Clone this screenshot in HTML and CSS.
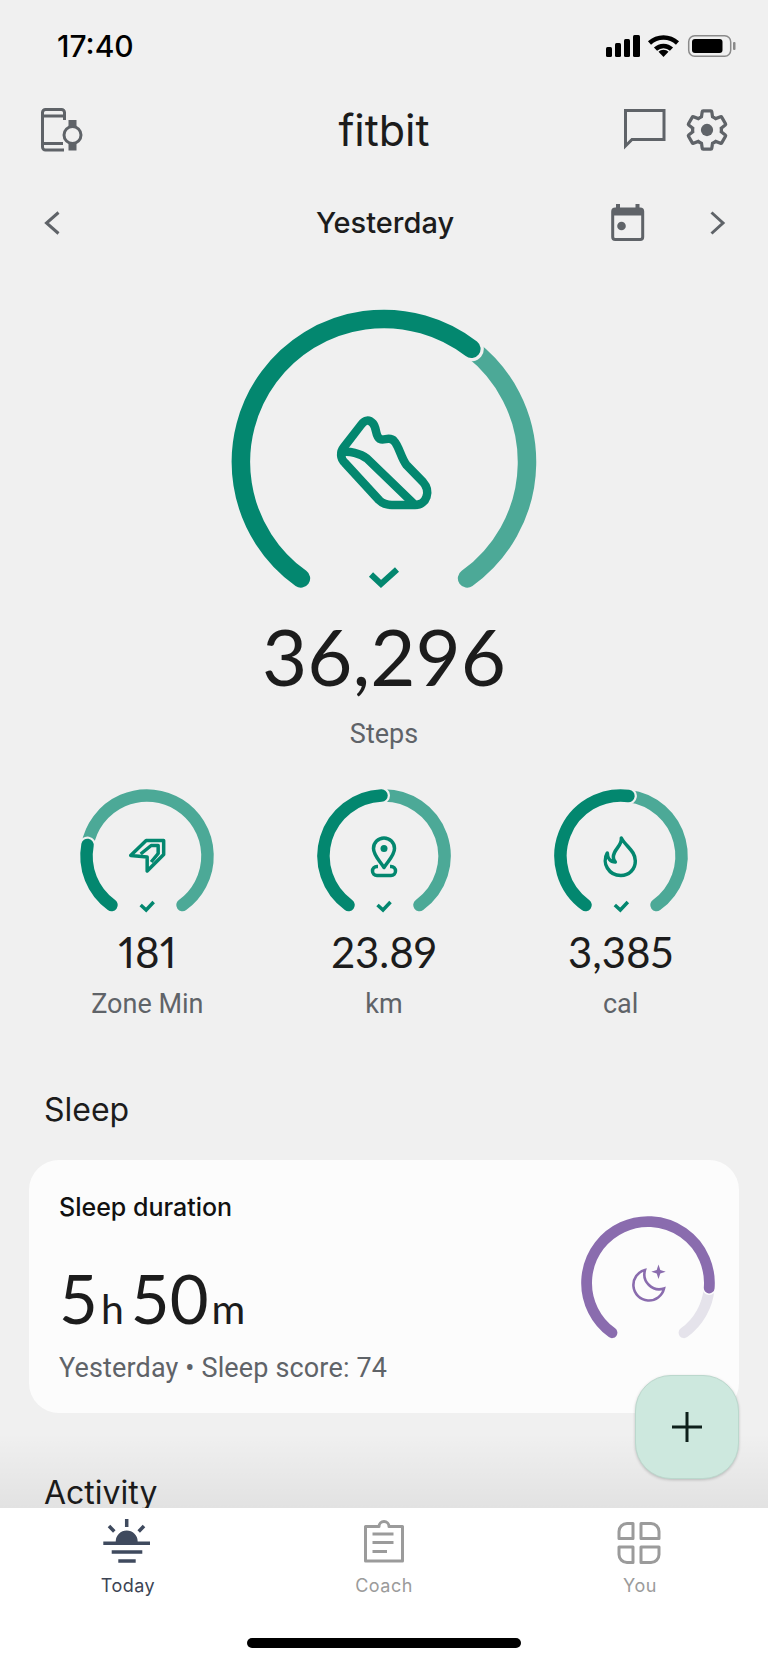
FILE: index.html
```html
<!DOCTYPE html>
<html lang="en">
<head>
    <meta charset="UTF-8">
    <meta name="viewport" content="width=device-width, initial-scale=1.0">
    <title>fitbit - Today</title>
    <link rel="stylesheet" href="styles.css">
</head>
<body>
<div class="phone">
    <main class="content">
        <!-- Status bar -->
        <div class="status-bar">
            <span class="clock">17:40</span>
            <svg class="status-icons" width="134" height="32" viewBox="604 30 134 32">
                <rect x="606" y="47" width="6" height="10" rx="1.5"/>
                <rect x="615" y="43" width="6" height="14" rx="1.5"/>
                <rect x="624" y="39" width="6" height="18" rx="1.5"/>
                <rect x="633" y="35" width="7" height="22" rx="1.5"/>
                <path class="wifi-arc" d="M649.500 43A20.500 20.500 0 0 1 677.500 43M655.500 49.200A11.500 11.500 0 0 1 671.500 49.200"/>
                <path d="M663.500 57l-5-5.200a7 7 0 0 1 10 0z"/>
                <rect class="battery-shell" x="688.700" y="35.700" width="42" height="20.600" rx="6"/>
                <rect x="692" y="39" width="30.500" height="14" rx="3"/>
                <rect class="battery-cap" x="733" y="42" width="2.500" height="8" rx="1"/>
            </svg>
        </div>

        <!-- Top bar -->
        <header class="top-bar">
            <svg class="line-icon" width="50" height="48" viewBox="38 106 50 48">
                <path d="M64.500 120v-7.500a3 3 0 0 0-3-3H45.500a3 3 0 0 0-3 3v34.500a3 3 0 0 0 3 3H64M42.500 116H64.500M42.500 143.500H63"/>
                <circle cx="72.500" cy="135" r="8.500"/>
                <path class="solid" d="M68.500 120h8v6.500h-8zM68.500 144h8v6.500h-8z"/>
            </svg>
            <h1 class="logo">fitbit</h1>
            <div class="top-actions">
                <svg class="line-icon" width="50" height="48" viewBox="620 106 50 48">
                    <path d="M625.500 146V110.500H664V139.500H632z"/>
                </svg>
                <svg class="line-icon gear" width="46" height="46" viewBox="0 0 24 24">
                    <path d="M19.430 12.980c.04-.32.07-.64.07-.98s-.03-.66-.07-.98l2.110-1.650c.19-.15.24-.42.12-.64l-2-3.460c-.12-.22-.39-.3-.61-.22l-2.490 1c-.52-.4-1.080-.73-1.690-.98l-.38-2.650C14.460 2.180 14.250 2 14 2h-4c-.25 0-.46.18-.49.42l-.38 2.650c-.61.25-1.170.59-1.690.98l-2.490-1c-.23-.09-.49 0-.61.22l-2 3.460c-.13.22-.07.49.12.64l2.110 1.650c-.04.32-.07.65-.07.98s.03.66.07.98l-2.110 1.650c-.19.15-.24.42-.12.64l2 3.460c.12.22.39.3.61.22l2.490-1c.52.4 1.080.73 1.690.98l.38 2.650c.03.24.24.42.49.42h4c.25 0 .46-.18.49-.42l.38-2.650c.61-.25 1.170-.59 1.690-.98l2.490 1c.23.09.49 0 .61-.22l2-3.460c.12-.22.07-.49-.12-.64z"/>
                    <circle class="solid" cx="12" cy="12" r="3.200"/>
                </svg>
            </div>
        </header>

        <!-- Date row -->
        <div class="date-bar">
            <svg class="line-icon" width="24" height="30" viewBox="40 208 24 30">
                <path d="M58.500 212.500L46.500 223L58.500 233.500"/>
            </svg>
            <span class="date-label">Yesterday</span>
            <div class="date-actions">
                <svg class="line-icon" width="42" height="46" viewBox="607 200 42 46">
                    <rect x="612.700" y="209" width="30" height="30.500" rx="2.500"/>
                    <path class="solid" d="M612.700 209h30v6.500h-30zM616 204h4v6h-4zM635.500 204h4v6h-4z"/>
                    <circle class="solid" cx="621.500" cy="226" r="4.300"/>
                </svg>
                <svg class="line-icon" width="24" height="30" viewBox="706 208 24 30">
                    <path d="M711.500 212.500L723 223L711.500 233.500"/>
                </svg>
            </div>
        </div>

        <!-- Steps goal -->
        <section class="hero">
            <svg class="hero-ring" width="320" height="304" viewBox="224 302 320 304">
                <path class="ring-light" d="M471.330 348.770A143 143 0 0 1 467.080 578.390"/>
                <path class="ring-halo" d="M300.920 578.390A143 143 0 1 1 471.330 348.770"/>
                <path class="ring-dark" d="M300.920 578.390A143 143 0 1 1 471.330 348.770"/>
                <path class="goal-icon" d="M361 425Q367 417 373 423.500C377 428 375 436 380 439C384 441 390 436 394 441C399 446 401 458 406.500 465L423 482C431 491 427 505 415 505H392C386 505 383 504 379 500L345 463C340 458 340 452 344 447Z"/>
                <path class="goal-icon" d="M343 452C349 451 360 453 366.700 458.300L413 503"/>
                <path class="goal-check" d="M371 574.500L381 584L397 569.500"/>
            </svg>
            <div class="hero-value">36,296</div>
            <div class="hero-label">Steps</div>
        </section>

        <!-- Small goals -->
        <section class="stats">
            <div class="stat">
                <svg class="stat-ring" width="140" height="130" viewBox="77.330 785 140 130">
                    <path class="ring-light" d="M87.840 845A60.500 60.500 0 1 1 182.830 905"/>
                    <path class="ring-halo" d="M111.830 905A60.500 60.500 0 0 1 87.840 845"/>
                    <path class="ring-dark" d="M111.830 905A60.500 60.500 0 0 1 87.840 845"/>
                    <path class="stat-icon" d="M131 855.500L146.500 840.500H164V854.500L147.500 871V857Z"/>
                    <path class="stat-icon" d="M141 854L151.500 845.500H158.500V853.500L151.500 862"/>
                    <path class="stat-check" d="M141 905L146.500 910L154 902"/>
                </svg>
                <div class="stat-value">181</div>
                <div class="stat-label">Zone Min</div>
            </div>
            <div class="stat">
                <svg class="stat-ring" width="140" height="130" viewBox="314 785 140 130">
                    <path class="ring-light" d="M381.500 795.550A60.500 60.500 0 0 1 419.500 905"/>
                    <path class="ring-halo" d="M348.500 905A60.500 60.500 0 0 1 381.500 795.550"/>
                    <path class="ring-dark" d="M348.500 905A60.500 60.500 0 0 1 381.500 795.550"/>
                    <path class="stat-icon" d="M384 867.500C379 860 373.500 855 373.500 848.500A10.500 10.500 0 0 1 394.500 848.500C394.500 855 389 860 384 867.500Z"/>
                    <circle class="stat-dot" cx="384" cy="848.500" r="3.500"/>
                    <path class="stat-icon" d="M378 866.500H377A4.500 4.500 0 0 0 377 875.500H391A4.500 4.500 0 0 0 391 866.500H390"/>
                    <path class="stat-check" d="M377.500 905L383 910L390.500 902"/>
                </svg>
                <div class="stat-value">23.89</div>
                <div class="stat-label">km</div>
            </div>
            <div class="stat">
                <svg class="stat-ring" width="140" height="130" viewBox="550.670 785 140 130">
                    <path class="ring-light" d="M628.070 795.950A60.500 60.500 0 0 1 656.170 905"/>
                    <path class="ring-halo" d="M585.170 905A60.500 60.500 0 0 1 628.070 795.950"/>
                    <path class="ring-dark" d="M585.170 905A60.500 60.500 0 0 1 628.070 795.950"/>
                    <path class="stat-icon" d="M621 838C622 846 613 849 613 857C613 859 614 861 615 862C610 862 607 858 607 853C604 858 604.500 864 607 868C610 873 615 875.500 620.500 875.500C629 875.500 635 869 635 861C635 851 626 847 621 838Z"/>
                    <path class="stat-check" d="M614.500 905L620 910L627.500 902"/>
                </svg>
                <div class="stat-value">3,385</div>
                <div class="stat-label">cal</div>
            </div>
        </section>

        <h2 class="section-title sleep-title">Sleep</h2>

        <article class="sleep-card">
            <div class="sleep-info">
                <div class="sleep-name">Sleep duration</div>
                <div class="sleep-value">5<span class="unit">h</span>50<span class="unit">m</span></div>
                <div class="sleep-meta">Yesterday • Sleep score: 74</div>
            </div>
            <svg class="sleep-ring" width="140" height="130" viewBox="578 1210 140 130">
                <path class="sleep-rest" d="M709.200 1288A61.400 61.400 0 0 1 684 1332.740"/>
                <path class="sleep-halo" d="M612 1332.740A61.400 61.400 0 1 1 709.200 1288"/>
                <path class="sleep-arc" d="M612 1332.740A61.400 61.400 0 1 1 709.200 1288"/>
                <path class="moon" d="M645 1270A15.500 15.500 0 1 0 664 1288.500A15 15 0 0 1 645 1270Z"/>
                <path class="star" d="M658.500 1264.500l1.800 5.400 5.400 1.800-5.400 1.800-1.800 5.400-1.800-5.400-5.400-1.800 5.400-1.800z"/>
            </svg>
        </article>

        <h2 class="section-title activity-title">Activity</h2>
    </main>

    <button class="fab" aria-label="Add">
        <svg width="32" height="32" viewBox="0 0 32 32"><path d="M16 1V31M1 16H31"/></svg>
    </button>

    <!-- Bottom tabs -->
    <nav class="tab-bar">
        <div class="tabs">
            <div class="tab active">
                <svg class="tab-icon" width="54" height="50" viewBox="101 1516 54 50">
                    <path class="sun-ray" d="M126.700 1519V1527M109 1526L114.300 1531.500M144 1526L138.700 1531.500"/>
                    <path d="M115.700 1541.500A11 11 0 0 1 137.700 1541.500ZM103.300 1541.500H150V1545H103.300ZM111.700 1550.300H142.300V1553.700H111.700ZM118.300 1559.300H135.700V1562.700H118.300Z"/>
                </svg>
                <span>Today</span>
            </div>
            <div class="tab">
                <svg class="tab-icon" width="54" height="50" viewBox="357 1516 54 50">
                    <path class="tab-line" d="M365.500 1526.500H379A5 5 0 0 1 389 1526.500H402.500V1561H365.500Z"/>
                    <path class="tab-line" d="M372.500 1534H393.500M372.500 1542.500H393.500M372.500 1551.500H387"/>
                </svg>
                <span>Coach</span>
            </div>
            <div class="tab">
                <svg class="tab-icon" width="54" height="50" viewBox="613 1516 54 50">
                    <path class="tab-line" d="M619 1538.500V1531.500A8 8 0 0 1 627 1523.500H633V1538.500ZM641 1523.500H651A8 8 0 0 1 659 1531.500V1538.500H641ZM619 1547H633V1562.500H627A8 8 0 0 1 619 1554.500ZM641 1547H659V1554.500A8 8 0 0 1 651 1562.500H641Z"/>
                </svg>
                <span>You</span>
            </div>
        </div>
        <div class="home-indicator"></div>
    </nav>
</div>
</body>
</html>
```

FILE: styles.css
```css
:root {
    --bg: #f0f0f0;
    --ink: #1c1c1c;
    --muted: #5f6368;
    --teal: #03876f;
    --teal-light: #4ca997;
    --purple: #8a6cae;
}

* {
    box-sizing: border-box;
}

body {
    margin: 0;
    background: var(--bg);
    color: var(--ink);
    font-family: Inter, "Liberation Sans", sans-serif;
}

svg {
    display: block;
    fill: none;
}

.phone {
    position: relative;
    width: 768px;
    height: 1662px;
    overflow: hidden;
}

.content {
    position: relative;
    height: 1508px;
    overflow: hidden;
}

.content::after {
    content: "";
    position: absolute;
    left: 0;
    right: 0;
    bottom: 0;
    height: 75px;
    background: linear-gradient(rgba(0,0,0,0), rgba(0,0,0,0.06));
}

/* Status bar */
.status-bar {
    height: 92px;
    padding: 0 30px 0 57px;
    display: flex;
    align-items: center;
    justify-content: space-between;
}

.clock {
    font-size: 30px;
    font-weight: 500;
    color: #000;
}

.status-icons {
    fill: #000;
}

.wifi-arc {
    fill: none;
    stroke: #000;
    stroke-width: 4.5;
}

.battery-shell {
    fill: none;
    stroke: #8a8a8a;
    stroke-width: 1.5;
}

.battery-cap {
    fill: #8a8a8a;
}

/* Top bar */
.top-bar {
    height: 76px;
    padding: 0 38px;
    display: grid;
    grid-template-columns: 1fr auto 1fr;
    align-items: center;
}

.logo {
    margin: 0;
    font-size: 43px;
    font-weight: 400;
    line-height: 50px;
}

.top-actions {
    display: flex;
    justify-content: flex-end;
    align-items: center;
    gap: 14px;
}

.line-icon {
    stroke: var(--muted);
    stroke-width: 3;
}

.line-icon.gear {
    stroke-width: 1.7;
}

.line-icon .solid {
    fill: var(--muted);
    stroke: none;
}

/* Date row */
.date-bar {
    height: 110px;
    padding: 0 38px 0 40px;
    display: grid;
    grid-template-columns: 1fr auto 1fr;
    align-items: center;
}

.date-label {
    padding-bottom: 2px;
    font-size: 29px;
    font-weight: 500;
}

.date-actions {
    display: flex;
    justify-content: flex-end;
    align-items: center;
    gap: 57px;
}

/* Steps */
.hero {
    padding-top: 24px;
    display: flex;
    flex-direction: column;
    align-items: center;
}

.ring-dark,
.ring-light,
.ring-halo {
    stroke-linecap: round;
}

.hero-ring .ring-dark,
.hero-ring .ring-light {
    stroke-width: 18.5;
}

.hero-ring .ring-halo {
    stroke-width: 25;
}

.ring-dark {
    stroke: var(--teal);
}

.ring-light {
    stroke: var(--teal-light);
}

.ring-halo {
    stroke: var(--bg);
}

.goal-icon {
    stroke: var(--teal);
    stroke-width: 8.5;
    stroke-linejoin: round;
    stroke-linecap: round;
}

.goal-check {
    stroke: var(--teal);
    stroke-width: 6;
}

.hero-value {
    margin-top: 10px;
    font-family: Lato, sans-serif;
    font-size: 78px;
    line-height: 80px;
}

.hero-label {
    margin-top: 21px;
    font-family: Roboto, sans-serif;
    font-size: 27px;
    line-height: 34px;
    color: var(--muted);
}

/* Small goals */
.stats {
    margin-top: 34px;
    padding: 0 29px;
    display: grid;
    grid-template-columns: repeat(3, 1fr);
}

.stat {
    display: flex;
    flex-direction: column;
    align-items: center;
}

.stat-ring .ring-dark,
.stat-ring .ring-light {
    stroke-width: 12.5;
}

.stat-ring .ring-halo {
    stroke-width: 17;
}

.stat-icon {
    stroke: var(--teal);
    stroke-width: 3.5;
    stroke-linejoin: round;
}

.stat-dot {
    fill: var(--teal);
}

.stat-check {
    stroke: var(--teal);
    stroke-width: 3.5;
}

.stat-value {
    margin-top: 14px;
    font-family: Lato, sans-serif;
    font-size: 42px;
    font-variant-numeric: proportional-nums;
    line-height: 46px;
}

.stat-label {
    margin-top: 12px;
    font-family: Roboto, sans-serif;
    font-size: 27px;
    line-height: 34px;
    color: var(--muted);
}

/* Sections */
.section-title {
    margin: 0;
    padding-left: 44px;
    font-size: 32px;
    font-weight: 400;
    line-height: 40px;
}

.sleep-title {
    margin-top: 69px;
}

.activity-title {
    margin-top: 60px;
}

.sleep-card {
    margin: 30px 29px 0;
    height: 253px;
    padding: 0 21px 0 30px;
    background: #fcfcfc;
    border-radius: 30px;
    display: flex;
    justify-content: space-between;
    align-items: flex-start;
}

.sleep-info {
    padding-top: 31px;
}

.sleep-name {
    font-size: 25px;
    font-weight: 500;
    line-height: 32px;
    color: #111;
}

.sleep-value {
    margin-top: 40px;
    font-family: Lato, sans-serif;
    font-size: 67px;
    line-height: 70px;
}

.unit {
    margin: 0 7px 0 3px;
    font-size: 41px;
    line-height: 0;
}

.sleep-meta {
    margin-top: 18px;
    font-family: Roboto, sans-serif;
    font-size: 27px;
    letter-spacing: 0.15px;
    line-height: 34px;
    color: var(--muted);
}

.sleep-ring {
    margin-top: 50px;
}

.sleep-rest,
.sleep-arc,
.sleep-halo {
    stroke-width: 10.8;
    stroke-linecap: round;
}

.sleep-rest {
    stroke: #e5e3eb;
}

.sleep-halo {
    stroke: #fcfcfc;
    stroke-width: 14;
}

.sleep-arc {
    stroke: var(--purple);
}

.moon {
    stroke: var(--purple);
    stroke-width: 2.6;
}

.star {
    fill: var(--purple);
}

/* Floating button */
.fab {
    position: absolute;
    top: 1375px;
    right: 29px;
    width: 104px;
    height: 104px;
    padding: 0;
    background: #cde8de;
    border: 1px solid #bbd8cd;
    border-radius: 36px;
    box-shadow: 0 1px 3px rgba(0,0,0,0.2);
    display: flex;
    align-items: center;
    justify-content: center;
}

.fab path {
    stroke: #0d1f1a;
    stroke-width: 3;
}

/* Bottom tabs */
.tab-bar {
    height: 154px;
    background: #fff;
    padding-top: 8px;
}

.tabs {
    display: grid;
    grid-template-columns: repeat(3, 1fr);
}

.tab {
    display: flex;
    flex-direction: column;
    align-items: center;
    font-size: 18px;
    line-height: 22px;
    letter-spacing: 0.5px;
    color: #9b9b9b;
}

.tab.active {
    color: #3c4454;
}

.tab span {
    margin-top: 9px;
}

.tab-icon {
    fill: #3f4a5e;
}

.sun-ray {
    stroke: #3f4a5e;
    stroke-width: 3.5;
}

.tab-line {
    fill: none;
    stroke: #9b9b9b;
    stroke-width: 3;
    stroke-linejoin: round;
}

.home-indicator {
    width: 274px;
    height: 10px;
    margin: 41px auto 0;
    background: #000;
    border-radius: 5px;
}
```
